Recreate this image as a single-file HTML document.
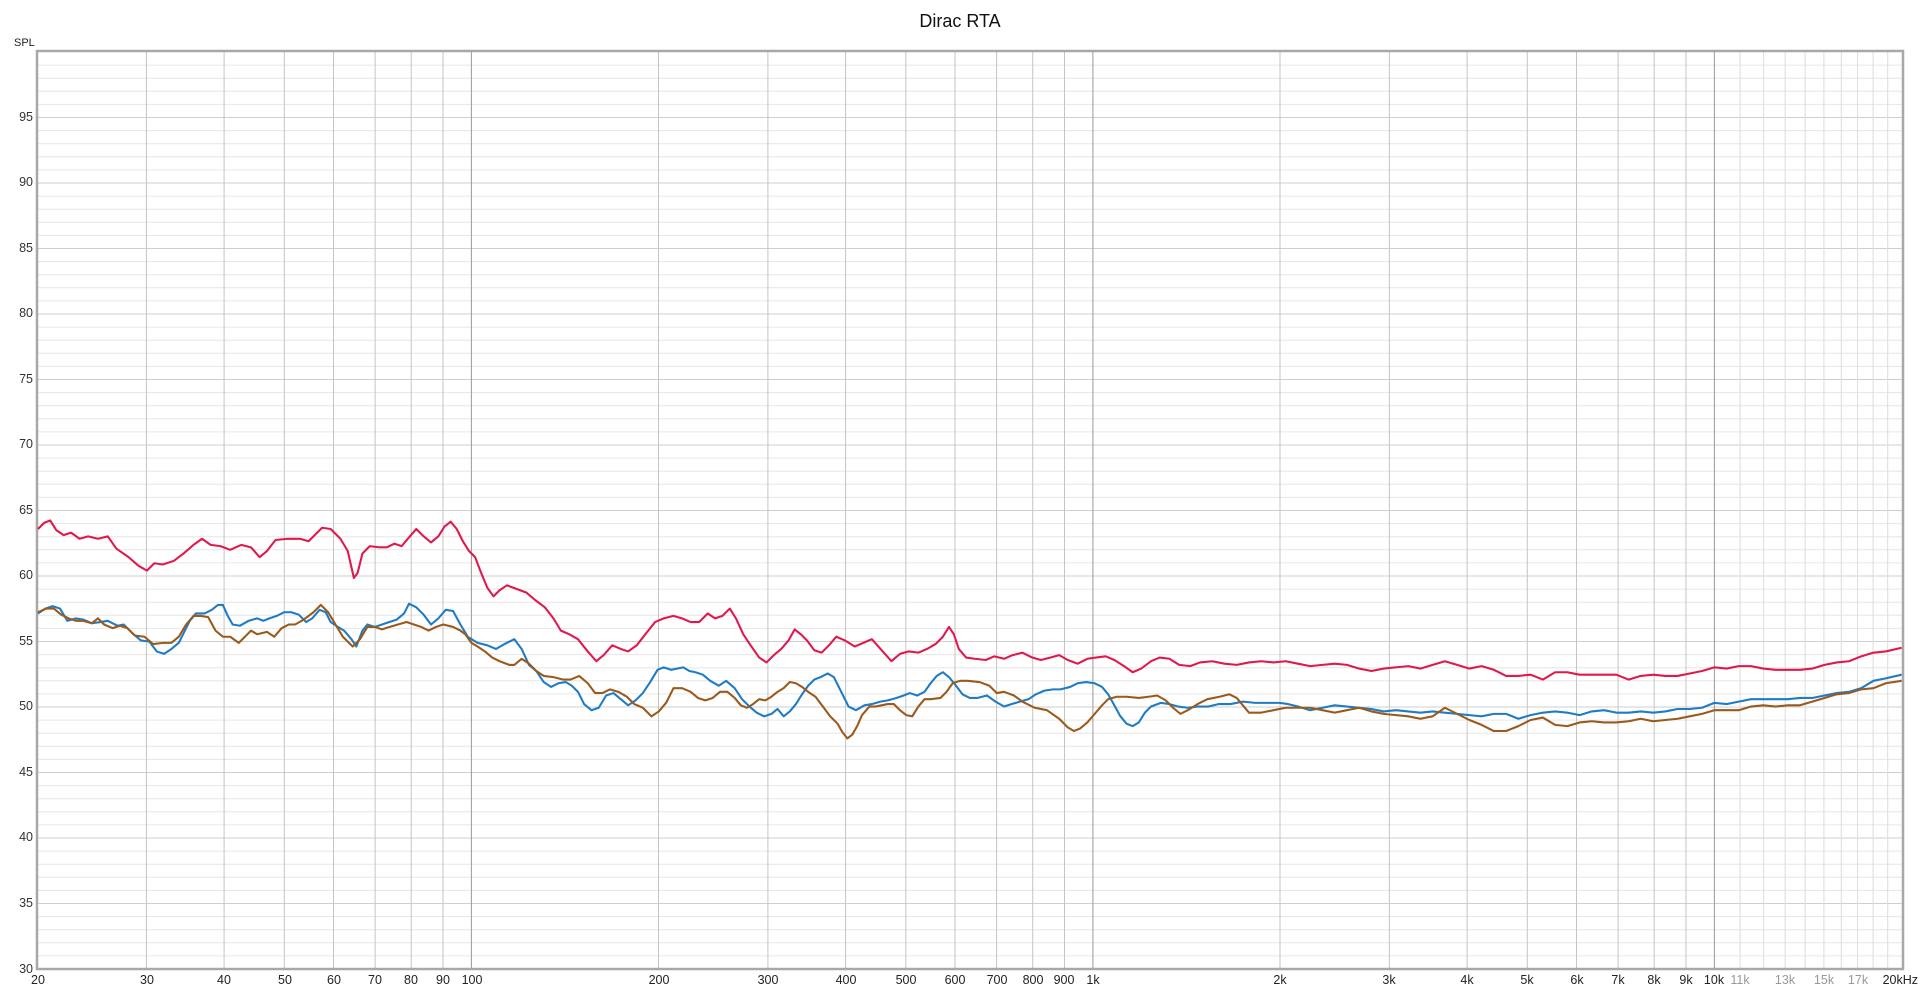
<!DOCTYPE html>
<html><head><meta charset="utf-8"><style>
html,body{margin:0;padding:0;background:#fff;width:1920px;height:989px;overflow:hidden}
svg{display:block;font-family:"Liberation Sans",Arial,sans-serif}
</style></head><body>
<svg id="s" width="1920" height="989" viewBox="0 0 1920 989" xmlns="http://www.w3.org/2000/svg">
<rect width="1920" height="989" fill="#fff"/>
<text x="960" y="27" font-size="18" text-anchor="middle" fill="#111">Dirac RTA</text>
<text x="14" y="46" font-size="11" fill="#222">SPL</text>
<g id="grid"></g>
<rect x="37" y="51" width="1866" height="918" fill="none" stroke="#a8a8a8" stroke-width="2.5"/>
<g font-size="12.5" fill="#333" text-anchor="end">
<text x="33" y="121">95</text><text x="33" y="186">90</text><text x="33" y="252">85</text>
<text x="33" y="317">80</text><text x="33" y="383">75</text><text x="33" y="448">70</text>
<text x="33" y="514">65</text><text x="33" y="579">60</text><text x="33" y="645">55</text>
<text x="33" y="710">50</text><text x="33" y="776">45</text><text x="33" y="841">40</text>
<text x="33" y="907">35</text><text x="33" y="973">30</text>
</g>
<g font-size="12.5" fill="#222" text-anchor="middle">
<text x="38" y="984">20</text><text x="147" y="984">30</text><text x="224" y="984">40</text>
<text x="285" y="984">50</text><text x="334" y="984">60</text><text x="375" y="984">70</text>
<text x="411" y="984">80</text><text x="443" y="984">90</text><text x="472" y="984">100</text>
<text x="659" y="984">200</text><text x="768" y="984">300</text><text x="846" y="984">400</text>
<text x="906" y="984">500</text><text x="955" y="984">600</text><text x="997" y="984">700</text>
<text x="1033" y="984">800</text><text x="1064" y="984">900</text><text x="1093" y="984">1k</text>
<text x="1280" y="984">2k</text><text x="1389" y="984">3k</text><text x="1467" y="984">4k</text>
<text x="1527" y="984">5k</text><text x="1577" y="984">6k</text><text x="1618" y="984">7k</text>
<text x="1654" y="984">8k</text><text x="1686" y="984">9k</text><text x="1714" y="984">10k</text>
<g fill="#999"><text x="1740" y="984">11k</text><text x="1785" y="984">13k</text>
<text x="1824" y="984">15k</text><text x="1858" y="984">17k</text></g>
<text x="1918" y="984" text-anchor="end">20kHz</text>
</g>
<g transform="scale(1.22449)" fill="none" stroke-width="1.7" stroke-linejoin="round">
<polyline stroke="#1f7cc4" points="31,501 37,497 43,495 49,497 55,507 62,505 68,506 75,509 82,508 88,507 92,509 96,511 101,510 108,517 115,523 122,524 128,532 134,534 140,530 146,525 150,517 155,507 160,501 167,501 173,498 178,494 182,494 186,503 190,510 196,511 203,507 210,505 215,507 220,505 226,503 232,500 238,500 244,502 250,508 255,505 261,498 266,500 270,508 276,512 281,515 287,522 291,528 296,515 300,510 306,512 312,510 318,508 324,506 330,501 334,493 340,496 346,502 352,510 358,505 364,498 370,499 376,510 382,520 390,525 398,527 405,530 412,526 420,522 426,530 432,543 438,548 444,557 450,561 456,558 462,557 467,560 472,565 477,575 483,580 489,578 495,568 501,566 507,571 513,576 519,572 525,566 531,557 537,547 542,545 548,547 553,546 558,545 563,548 568,549 574,551 580,556 587,560 593,556 600,562 606,571 612,577 618,582 624,585 630,583 635,579 640,585 645,581 650,575 655,567 660,560 665,555 670,553 676,550 681,553 687,565 693,577 699,580 706,576 712,575 719,573 725,572 732,570 738,568 743,566 749,568 755,565 760,558 765,552 770,549 775,553 780,559 786,567 792,570 798,570 806,568 813,573 820,577 826,575 833,573 840,571 846,567 853,564 860,563 866,563 874,561 880,558 887,557 894,558 900,561 905,567 910,576 915,585 920,591 925,593 930,590 935,582 940,577 948,574 955,575 962,577 970,578 978,577 987,577 995,575 1005,575 1015,573 1025,574 1035,574 1045,574 1052,575 1060,577 1070,580 1080,578 1090,576 1100,577 1110,578 1120,579 1130,581 1140,580 1150,581 1160,582 1170,581 1180,582 1190,583 1200,584 1210,585 1220,583 1230,583 1240,587 1250,584 1260,582 1270,581 1280,582 1290,584 1300,581 1310,580 1320,582 1330,582 1340,581 1350,582 1360,581 1370,579 1380,579 1390,578 1400,574 1410,575 1420,573 1430,571 1440,571 1450,571 1460,571 1470,570 1480,570 1490,568 1500,566 1510,565 1520,562 1530,556 1540,554 1553,551"/>
<polyline stroke="#9a5a1c" points="31,500 38,497 44,497 50,502 56,505 62,507 68,507 75,509 80,505 85,510 92,513 98,511 104,513 110,519 118,520 125,526 133,525 140,525 146,520 152,510 158,503 164,503 170,504 176,515 182,520 188,520 195,525 200,520 205,515 210,518 218,516 224,520 230,513 236,510 241,510 248,506 256,500 262,494 268,500 274,510 280,520 288,528 294,522 300,512 306,512 312,514 318,512 325,510 332,508 338,510 344,512 350,515 356,512 362,510 370,512 376,515 380,518 385,525 390,528 396,532 402,537 408,540 416,543 420,543 426,538 432,542 438,548 444,552 452,553 460,555 466,555 473,552 480,558 486,566 492,566 498,563 505,565 512,569 518,575 525,578 532,585 538,581 544,574 550,562 557,562 564,565 570,570 576,572 582,570 588,565 594,565 600,570 605,576 610,578 615,575 620,571 625,572 630,569 635,565 640,562 645,557 650,558 655,561 660,565 666,569 672,577 678,585 684,591 688,598 692,603 696,600 700,593 704,584 710,577 715,577 720,576 725,575 730,575 735,580 740,584 745,585 750,577 755,571 760,571 768,570 773,565 778,558 784,556 790,556 800,557 808,560 814,566 820,565 828,568 835,573 845,578 855,580 865,587 872,594 877,597 882,595 888,590 894,583 900,576 905,571 912,569 920,569 930,570 938,569 945,568 952,572 958,578 964,583 970,580 978,575 986,571 996,569 1004,567 1010,570 1020,582 1030,582 1040,580 1050,578 1060,578 1070,578 1080,580 1090,582 1100,580 1110,578 1120,581 1130,583 1140,584 1150,585 1160,587 1170,585 1180,578 1190,583 1200,588 1210,592 1220,597 1230,597 1240,593 1250,588 1260,586 1270,592 1280,593 1290,590 1300,589 1310,590 1320,590 1330,589 1340,587 1350,589 1360,588 1370,587 1380,585 1390,583 1400,580 1410,580 1420,580 1430,577 1440,576 1450,577 1460,576 1470,576 1480,573 1490,570 1500,567 1510,566 1520,563 1530,562 1540,558 1553,556"/>
<polyline stroke="#e0194c" points="31,432 36,427 41,425 46,433 52,437 58,435 65,440 72,438 80,440 88,438 95,448 105,455 113,462 120,466 126,460 133,461 142,458 150,452 158,445 165,440 172,445 180,446 188,449 197,445 205,447 212,455 218,450 225,441 235,440 245,440 252,442 258,436 263,431 270,432 278,440 284,450 289,472 292,468 296,452 302,446 310,447 316,447 322,444 328,446 333,440 340,432 346,438 352,443 358,438 363,430 368,426 373,432 378,442 383,450 388,455 393,468 398,480 403,487 408,482 414,478 422,481 430,484 437,490 445,496 452,505 458,515 465,518 472,522 480,532 487,540 493,535 500,527 507,530 513,532 520,527 527,518 535,508 542,505 550,503 557,505 564,508 571,508 578,501 584,505 590,503 596,497 601,505 607,518 613,527 620,537 626,541 632,535 638,530 644,523 649,514 654,518 659,523 665,531 671,533 677,527 683,520 690,523 698,528 705,525 712,522 720,531 728,540 735,534 742,532 750,533 757,530 764,526 770,520 775,512 779,518 783,530 789,537 796,538 805,539 812,536 820,538 827,535 835,533 843,537 850,539 858,537 865,535 872,539 880,542 888,538 895,537 903,536 910,539 918,544 925,549 932,546 940,540 947,537 955,538 963,543 972,544 980,541 990,540 1000,542 1010,543 1020,541 1030,540 1040,541 1050,540 1060,542 1070,544 1080,543 1090,542 1100,543 1110,546 1120,548 1130,546 1140,545 1150,544 1160,546 1170,543 1180,540 1190,543 1200,546 1210,544 1220,547 1230,552 1240,552 1250,551 1260,555 1270,549 1280,549 1290,551 1300,551 1310,551 1320,551 1330,555 1340,552 1350,551 1360,552 1370,552 1380,550 1390,548 1400,545 1410,546 1420,544 1430,544 1440,546 1450,547 1460,547 1470,547 1480,546 1490,543 1500,541 1510,540 1520,536 1530,533 1540,532 1553,529"/>
</g>
</svg>
<script>
(function(){
var g=document.getElementById('grid'),ns='http://www.w3.org/2000/svg',h='';
function X(f){return 37+Math.log10(f/20)*621.5;}
for(var d=31;d<100;d++){var y=969-(d-30)*13.1;h+='<line x1="37" x2="1903" y1="'+y.toFixed(1)+'" y2="'+y.toFixed(1)+'" stroke="'+(d%5==0?'#cfcfcf':'#e6e6e6')+'" stroke-width="1"/>';}
var fs=[];
for(var f=30;f<100;f+=10)fs.push([f,'#c4c4c4']);
for(f=200;f<1000;f+=100)fs.push([f,'#c4c4c4']);
for(f=2000;f<10000;f+=1000)fs.push([f,'#c4c4c4']);
for(f=11000;f<20000;f+=1000)fs.push([f,'#dcdcdc']);
[100,1000,10000].forEach(function(v){fs.push([v,'#9a9a9a']);});
fs.forEach(function(p){var x=X(p[0]).toFixed(1);h+='<line x1="'+x+'" x2="'+x+'" y1="51" y2="969" stroke="'+p[1]+'" stroke-width="1"/>';});
g.innerHTML=h;
})();
</script>
</body></html>
